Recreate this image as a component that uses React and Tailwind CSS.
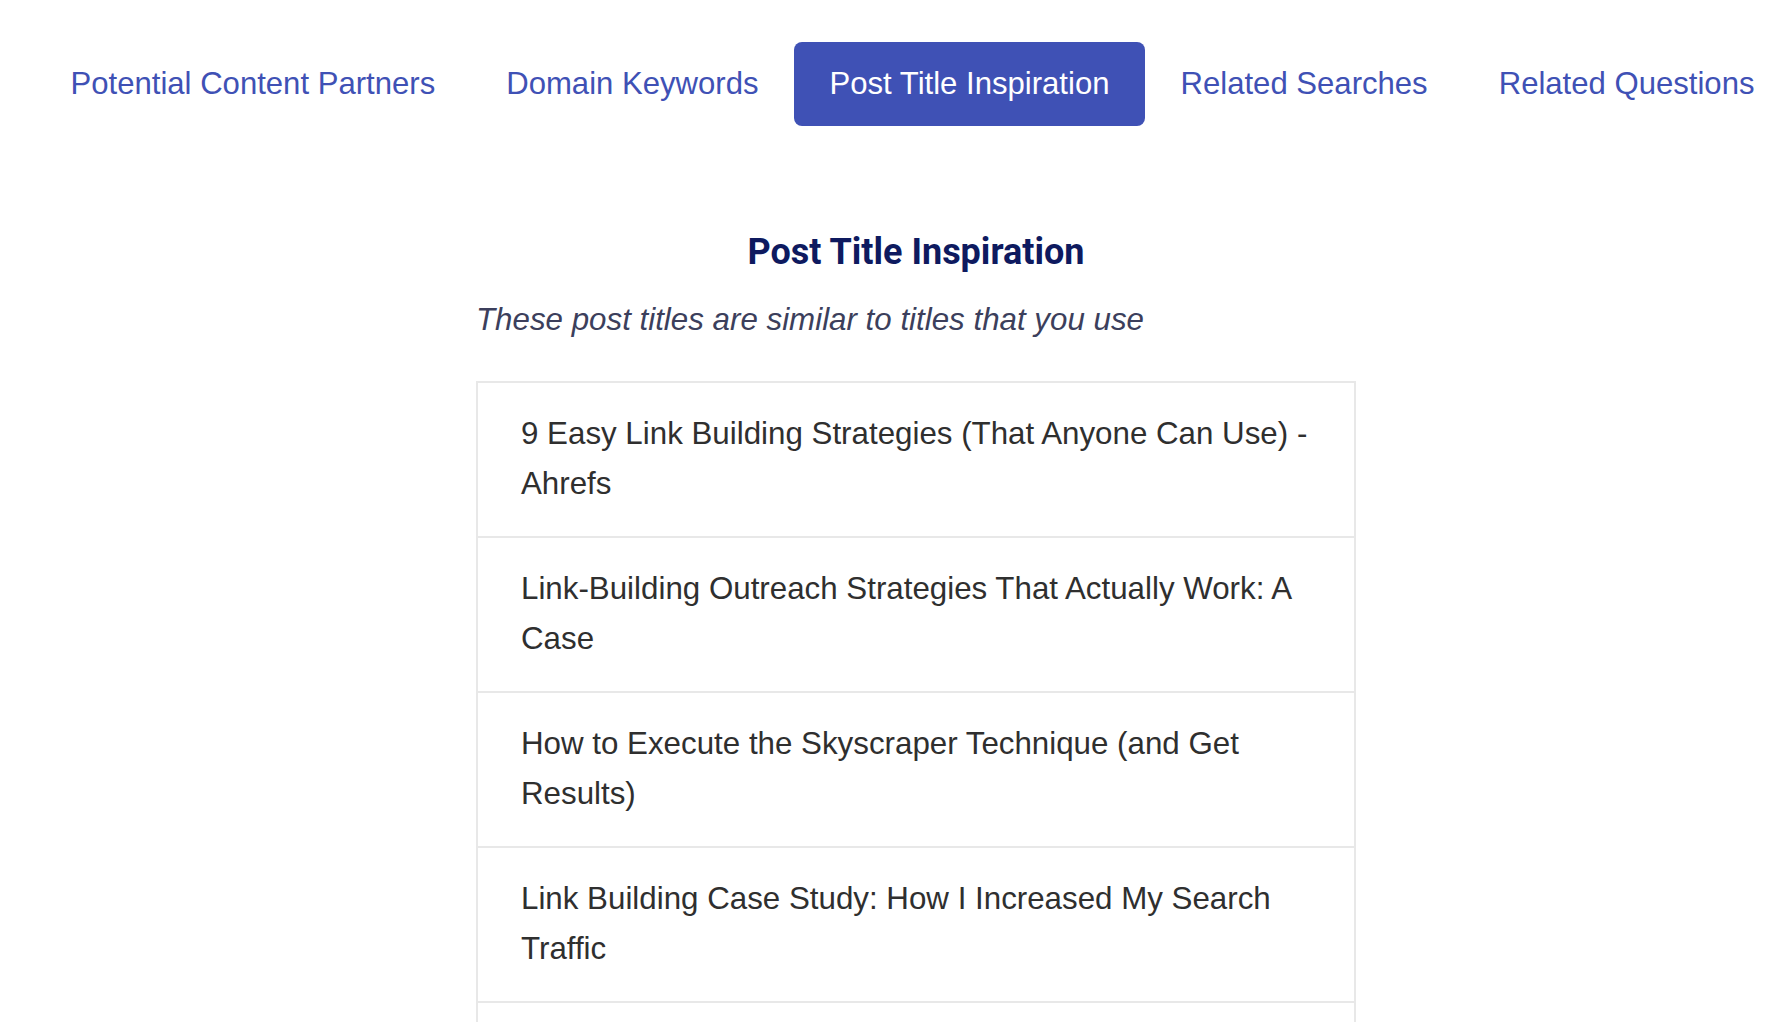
const tabs = [
  'Potential Content Partners',
  'Domain Keywords',
  'Post Title Inspiration',
  'Related Searches',
  'Related Questions',
];

const titles = [
  '9 Easy Link Building Strategies (That Anyone Can Use) - Ahrefs',
  'Link-Building Outreach Strategies That Actually Work: A Case',
  'How to Execute the Skyscraper Technique (and Get Results)',
  'Link Building Case Study: How I Increased My Search Traffic',
  'The Beginner’s Guide to Link Building',
];

export default function App() {
  const active = 'Post Title Inspiration';

  return (
    <div className="h-screen overflow-hidden bg-white font-['Liberation_Sans',Arial,sans-serif]">
      <div className="w-[1832px]">
        {/* tab bar */}
        <div className="flex pl-[35px] pt-[42px]">
          {tabs.map((tab) => (
            <button
              key={tab}
              className={
                tab === active
                  ? 'h-[84px] px-[35.5px] flex items-center whitespace-nowrap text-[31.1px] rounded-lg bg-[#3f51b5] text-white'
                  : 'h-[84px] px-[35.5px] flex items-center whitespace-nowrap text-[31.1px] rounded-lg text-[#3f51b5]'
              }
            >
              {tab}
            </button>
          ))}
        </div>

        <div className="w-[880px] mx-auto">
          <h2 className="mt-[106px] text-center text-[36px] leading-[40px] font-bold text-[#0e1a5f] font-['Roboto',sans-serif]">
            Post Title Inspiration
          </h2>
          <p className="mt-[28px] text-[31.3px] leading-[40px] italic text-[#3c3f5c]">
            These post titles are similar to titles that you use
          </p>

          <ul className="mt-[41px] border-2 border-[#e8e8e8]">
            {titles.map((title) => (
              <li
                key={title}
                className="border-b-2 border-[#e8e8e8] px-[43px] pt-[26px] pb-[27px] text-[31.3px] leading-[50px] text-[#2f2f2f]"
              >
                {title}
              </li>
            ))}
          </ul>
        </div>
      </div>
    </div>
  );
}
